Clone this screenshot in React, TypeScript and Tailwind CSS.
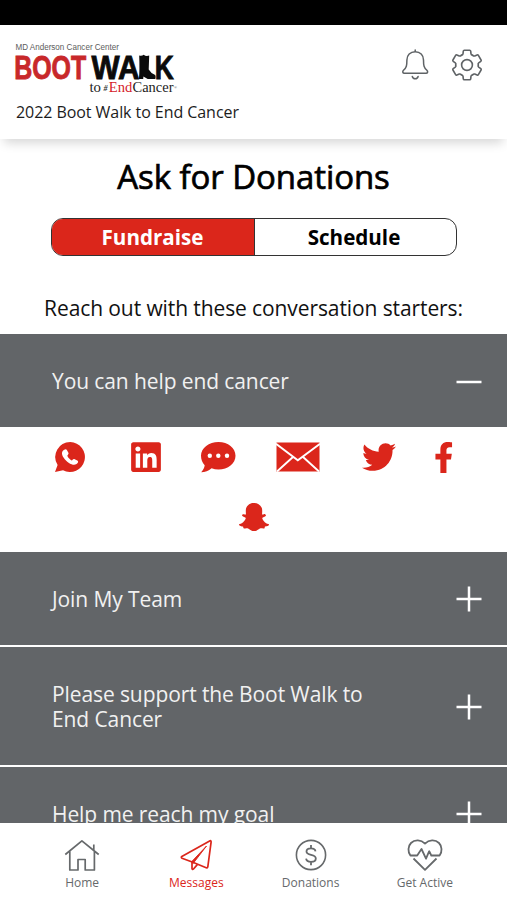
import { FaFacebookF, FaLinkedin, FaSnapchatGhost, FaTwitter } from "react-icons/fa";

const Logo = () => (
  <svg width="164" height="58" viewBox="14 41 164 58" className="block">
    <text x="15.500" y="50.300" fontSize="8.400" textLength="103.500" lengthAdjust="spacingAndGlyphs" fill="#5c5c5c" fontFamily="Liberation Sans, sans-serif">
      MD Anderson Cancer Center
    </text>
    <g fontFamily="Liberation Sans, sans-serif" fontWeight="bold" fontSize="33" strokeWidth="0.900">
      <text x="14.200" y="78.700" textLength="72" lengthAdjust="spacingAndGlyphs" fill="#c8282a" stroke="#c8282a">
        BOOT
      </text>
      <g fill="#0b0b0b" stroke="#0b0b0b">
        <text x="91.500" y="78.700" textLength="48" lengthAdjust="spacingAndGlyphs">
          WA
        </text>
        <text x="154.800" y="78.700" textLength="19" lengthAdjust="spacingAndGlyphs">
          K
        </text>
        {/* Boot standing in for the L */}
        <path strokeWidth="0" d="M139.200 55.500q2.500 1 4.500-.8 2.300 2 5.500.8l-.5 14q2.800 4.300 5.600 5 2 .8 1 4.500h-7.600l-4.300-2.500-.2 2.500h-4.300q.9-9 .3-23.500Z" />
      </g>
    </g>
    <g fontFamily="Liberation Serif, serif">
      <text x="89.500" y="92" fontSize="14" textLength="11.500" lengthAdjust="spacingAndGlyphs" fill="#222">
        to
      </text>
      <text x="103.500" y="91" fontSize="8" fontStyle="italic" fontWeight="bold" fill="#333">
        #
      </text>
      <text x="108.800" y="92" fontSize="15" textLength="23.500" lengthAdjust="spacingAndGlyphs" fill="#d5202a">
        End
      </text>
      <text x="132.500" y="92" fontSize="15" textLength="41" lengthAdjust="spacingAndGlyphs" fill="#222">
        Cancer
      </text>
      <text x="174" y="89" fontSize="4" fill="#555">
        ®
      </text>
    </g>
  </svg>
);

const BellIcon = () => (
  <svg width="28" height="34" viewBox="401 48 28 34" fill="none" stroke="#5f6366" strokeWidth="1.500" strokeLinecap="round" strokeLinejoin="round">
    <path d="M415.200 50v1.700c-5 0-8.300 3.500-8.300 8.300 0 5.500-.4 7.500-3.400 10.300-1.300 1.300-.8 2.900.8 2.900h21.800c1.600 0 2.100-1.600.8-2.900-3-2.800-3.400-4.800-3.400-10.300 0-4.800-3.300-8.300-8.300-8.300" />
    <path d="M412.300 76.500c.8 3 5 3 5.800 0" />
  </svg>
);

const GearIcon = () => (
  <svg width="32" height="34" viewBox="-16 -17 32 34" fill="none" stroke="#5f6366" strokeWidth="1.600" strokeLinecap="round" strokeLinejoin="round">
    {[0, 60, 120, 180, 240, 300].map((angle) => (
      <path key={angle} transform={`rotate(${angle})`} d="M-5.700-9.800Q-4.200-10-4-11.200L-3.700-13.800Q-3.600-14.700-2.700-14.700H2.700Q3.600-14.700 3.700-13.800L4-11.200Q4.200-10 5.700-9.800" />
    ))}
    <circle r="5.400" />
  </svg>
);

const WhatsAppIcon = () => (
  <svg width="32" height="32" viewBox="0 0 32 32">
    <path fill="#db261b" d="M16.300 1A15 15 0 1 1 9 29.300L1 31l2.600-7A15 15 0 0 1 16.300 1Z" />
    <path fill="#fff" d="M10.200 8.800c1.300-1 2.300-.6 2.800.4l1.400 2.600c.5 1-.2 1.700-1 2.600-.6.7 3.700 5.500 4.600 5 .9-.8 1.700-1.700 2.700-1.200l2.600 1.400c1 .6 1.100 1.600.3 2.500-1.900 2.400-5 2.300-9-.4-3.500-2.300-7.400-7-6.500-10.400.3-1.100 1.200-1.900 2.100-2.500Z" />
  </svg>
);

const ChatIcon = () => (
  <svg width="36" height="32" viewBox="0 0 36 32">
    <path fill="#db261b" d="M18.500 1C28 1 35.500 7 35.500 14.700S28 28.500 18.500 28.500c-2.500 0-4.800-.4-6.900-1.200C8.600 30 5 31.300 1.200 31.300c2-2.200 3.300-4.500 3.500-7C2.400 21.800 1 18.500 1 14.700 1 7 9 1 18.500 1Z" />
    <g fill="#fff">
      <circle cx="9.800" cy="14.700" r="2.200" />
      <circle cx="18.300" cy="14.700" r="2.200" />
      <circle cx="27" cy="14.700" r="2.200" />
    </g>
  </svg>
);

const MailIcon = () => (
  <svg width="44" height="30" viewBox="0 0 44 30">
    <path fill="#db261b" d="M.5.500h43v29H.5Z" />
    <path fill="none" stroke="#fff" strokeWidth="1.900" d="M0 1.800 21.800 18.200 44 1.800M1 29.500l15.700-14.300M43 29.500 27.300 15.200" />
  </svg>
);

const HomeIcon = () => (
  <svg width="36" height="32" viewBox="64.500 838.500 36 32" fill="none" stroke="currentColor" strokeWidth="1.700" strokeLinejoin="round">
    <path d="m65.800 854 16.600-13.700L99.200 854M94.300 849.500V844M70.300 851v18.500h8.200V859h7.200v10.500h9.200V851" />
  </svg>
);

const MessagesIcon = () => (
  <svg width="34" height="32" viewBox="179.500 838.500 34 32" fill="none" stroke="currentColor" strokeWidth="1.700" strokeLinejoin="round">
    <path d="M210.600 840.300 182.300 856q-1 .9.200 1.700l10.200 3.800 14 5.700q1.300.4 1.600-.9l3.300-24.700q.1-1.700-1-1.300Z" />
    <path d="M192.500 861v7q.4 1.600 1.500.5l3.800-4.400" />
    <path d="m207 845.500-10.700 14-2.800 3.500-1.200-2Z" fill="currentColor" strokeWidth=".9" />
  </svg>
);

const DonationsIcon = () => (
  <svg width="32" height="32" viewBox="0 0 32 32" fill="none" stroke="currentColor" strokeWidth="1.600">
    <circle cx="16" cy="16" r="14.600" />
    <path strokeWidth="1.800" d="M20.500 12.300c-.3-2-2-3-4.500-3-2.800 0-4.500 1.200-4.500 3.200 0 4.700 9.300 2 9.300 6.900 0 2.100-1.900 3.400-4.800 3.400-2.800 0-4.600-1.100-4.900-3.200M16 6v3.300M16 22.800v3.500" />
  </svg>
);

const ActiveIcon = () => (
  <svg width="36" height="32" viewBox="407 838.500 36 32" fill="none" stroke="currentColor" strokeWidth="1.800" strokeLinejoin="round">
    <path d="M417.200 855h-6.800c-2.800-3.700-2.500-9.400.6-12.500 3.900-3.700 10-3.300 14 .6 4-3.900 10.100-4.300 14-.6 3.100 3.100 3.400 8.800.6 12.500h-8.300l-2.100-4.300-3.200 7.500-4.500-9.700Z" />
    <path d="m413.500 858 11.500 11.300 11.500-11.300" />
  </svg>
);

const starters = [
  { title: "Join My Team", height: "h-[93px]" },
  { title: "Please support the Boot Walk to End Cancer", height: "h-[118px]" },
  { title: "Help me reach my goal", height: "h-[93px]" },
];

const tabs = [
  { label: "Home", icon: <HomeIcon /> },
  { label: "Messages", icon: <MessagesIcon />, active: true },
  { label: "Donations", icon: <DonationsIcon /> },
  { label: "Get Active", icon: <ActiveIcon /> },
];

const Toggle = ({ open = false }: { open?: boolean }) => (
  <svg width="26" height="26" viewBox="0 0 26 26" stroke="#fff" strokeWidth="2.500" className="shrink-0">
    <path d={open ? "M.5 13h25" : "M.5 13h25M13 .5v25"} />
  </svg>
);

const App = () => {
  return (
    <div className="h-[900px] w-[507px] overflow-hidden flex flex-col bg-white text-black font-['Open_Sans',sans-serif]">
      <div className="h-[25px] shrink-0 bg-black"></div>

      <header className="h-[114px] shrink-0 flex justify-between px-3.5 pt-4 bg-white shadow-[0_8px_10px_-4px_rgba(0,0,0,0.16)]">
        <div>
          <Logo />
          <p className="mt-[1px] ml-[2px] text-[16px] tracking-[-0.06px] leading-[24px] whitespace-nowrap text-[#1c1c1c]">
            2022 Boot Walk to End Cancer
          </p>
        </div>
        <div className="flex gap-[22px] pt-[7px] pr-[10px]">
          <BellIcon />
          <GearIcon />
        </div>
      </header>

      <main className="flex-1 min-h-0 overflow-hidden">
        <h1 className="mt-[16px] h-[43px] leading-[43px] text-center text-[33px] tracking-[-0.08px] whitespace-nowrap [-webkit-text-stroke:0.7px_#000]">
          Ask for Donations
        </h1>
        <div className="mt-[20px] mx-auto w-[406px] h-[38px] flex rounded-[12px] border border-[#333] overflow-hidden text-[20.600px] leading-[36px] font-bold text-center">
          <button className="w-[203px] bg-[#db261b] text-white border-r border-[#333]">
            Fundraise
          </button>
          <button className="flex-1 pr-0.5">Schedule</button>
        </div>
        <p className="mt-[38px] h-[29px] leading-[29px] text-center text-[21px] tracking-[-0.1px] whitespace-nowrap text-[#111]">
          Reach out with these conversation starters:
        </p>

        {/* Open starter with its share targets */}
        <div className="mt-[11px] h-[93px] flex items-center justify-between pt-[3px] pl-[52px] pr-[25px] bg-[#626568] text-[#f1f1f1] text-[21px] tracking-[-0.1px]">
          <span>You can help end cancer</span>
          <Toggle open />
        </div>
        <div className="h-[125px] pt-[14px] text-[#db261b]">
          <div className="h-8 flex items-center pl-[54px]">
            <WhatsAppIcon />
            <FaLinkedin size={34} className="ml-[43px]" />
            <span className="ml-[37px]">
              <ChatIcon />
            </span>
            <span className="ml-[39.500px]">
              <MailIcon />
            </span>
            <FaTwitter size={34} className="ml-[42px]" />
            <FaFacebookF className="ml-[38.500px] w-[19.500px] h-[31px]" />
          </div>
          <div className="mt-[29px] flex justify-center">
            <FaSnapchatGhost size={30} />
          </div>
        </div>

        <div className="flex flex-col gap-[2px]">
          {starters.map((starter) => (
            <div
              key={starter.title}
              className={`${starter.height} shrink-0 flex items-center justify-between pt-px pl-[52px] pr-[25px] bg-[#626568] text-[#f1f1f1] text-[21px] tracking-[-0.1px] leading-[24.500px]`}
            >
              <span className="w-[330px]">{starter.title}</span>
              <Toggle />
            </div>
          ))}
        </div>
      </main>

      <nav className="h-[77px] shrink-0 flex px-[25px] pt-[15.500px] bg-white">
        {tabs.map((tab) => (
          <div
            key={tab.label}
            className={`flex-1 flex flex-col items-center text-[12px] leading-[16px] ${tab.active ? "text-[#db261b]" : "text-[#66696b]"}`}
          >
            {tab.icon}
            <span className="mt-[4px]">{tab.label}</span>
          </div>
        ))}
      </nav>
    </div>
  );
};

export default App;
